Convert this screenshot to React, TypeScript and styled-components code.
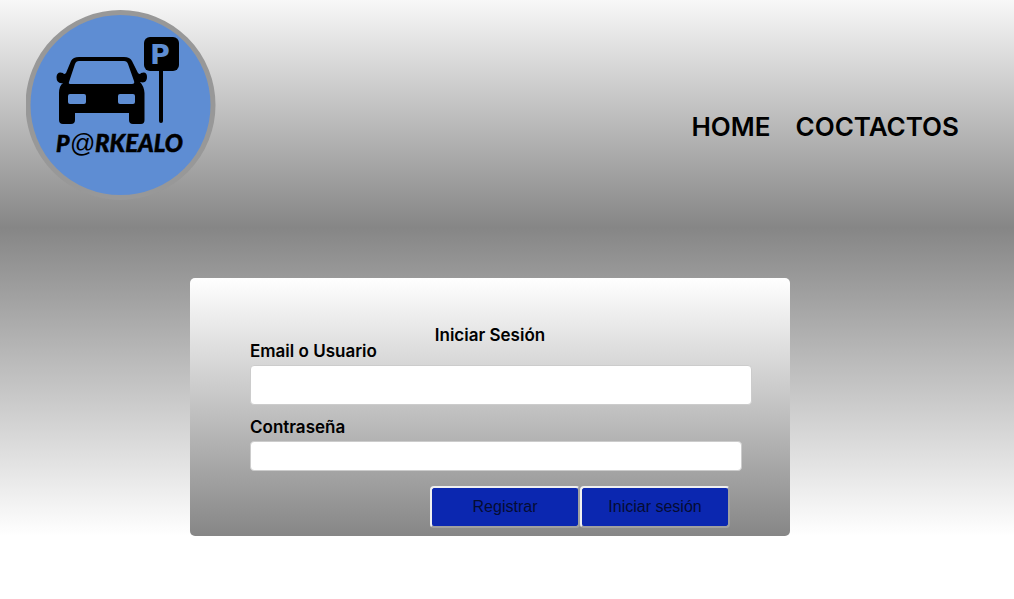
import React from "react";
import styled, { createGlobalStyle } from "styled-components";

const GlobalStyle = createGlobalStyle`
  *, *::before, *::after { box-sizing: border-box; }
  body {
    margin: 0;
    background: #fff;
    color: #000;
    font-family: Inter, "Liberation Sans", sans-serif;
    font-size: 17px;
    font-weight: 600;
  }
`;

const Header = styled.header`
  display: flex;
  justify-content: space-between;
  align-items: flex-start;
  padding: 10px 55px 28px 26px;
  background: linear-gradient(#f8f8f8, #868686);
`;

const LogoArt = styled.svg`
  display: block;
  width: 190px;
  height: 190px;
`;

const Nav = styled.nav`
  display: flex;
  gap: 25px;
  padding-top: 102px;
`;

const NavLink = styled.a`
  color: #000;
  font-size: 26px;
  line-height: 30px;
  text-decoration: none;
`;

const Main = styled.main`
  padding: 50px 34px 0 0;
  background: linear-gradient(#868686, #fff);
`;

const Card = styled.form`
  max-width: 600px;
  margin: 0 auto;
  padding: 49px 0 8px;
  border-radius: 5px;
  background: linear-gradient(#fff, #868686);
`;

const Title = styled.h1`
  margin: 0;
  font-size: 17px;
  font-weight: 600;
  line-height: 16px;
  text-align: center;
`;

const Fields = styled.div`
  display: flex;
  flex-direction: column;
  padding: 0 38px 0 60px;
`;

const Label = styled.label`
  line-height: 16px;
  margin-bottom: 6px;
`;

const Input = styled.input<{ $compact?: boolean }>`
  width: ${(p) => (p.$compact ? "calc(100% - 10px)" : "100%")};
  height: ${(p) => (p.$compact ? 30 : 40)}px;
  margin: 0 0 ${(p) => (p.$compact ? 15 : 14)}px;
  padding: 0 10px;
  border: 1px solid #ccc;
  border-radius: 4px;
  background: #fff;
  font: inherit;
`;

const Actions = styled.div`
  display: flex;
  justify-content: flex-end;
  padding-right: 22px;
`;

const Button = styled.button`
  width: 150px;
  height: 42px;
  padding: 0;
  border: 2px solid;
  border-color: #f0f0f0 #a0a0a0 #a0a0a0 #f0f0f0;
  border-radius: 4px;
  background: #0b27b0;
  color: #050c33;
  font: 400 16px "Liberation Sans", sans-serif;
`;

function Logo() {
  return (
    <LogoArt viewBox="26 10 190 190" role="img" aria-label="P@rkealo">
      <circle cx="120.5" cy="105" r="92.5" fill="#5e8dd3" stroke="#989898" strokeWidth="5" />
      <path
        fillRule="evenodd"
        d="M79 57H124Q130 57 132 61L138 73Q140 75 141 73Q147 71 147 77Q147 84 140 82Q144 86 144.500 93V120Q144.500 124 141 124H133Q129 124 129 120V113H75V120Q75 124 71 124H63Q59 124 59 120V93Q59 86 63 83Q56.500 84 56.500 77Q57 71 63 73Q64 75 66 73L71 61Q73 57 79 57ZM79 61Q76 61 75 64L69 82Q68 84 71 84H132Q135 84 134 81L128 64Q127 61 124 61ZM70 94Q68 94 68 96V102Q68 104 70 104H84Q86 104 86 102V96Q86 94 84 94ZM120 94Q118 94 118 96V102Q118 104 120 104H133Q135 104 135 102V96Q135 94 133 94Z"
      />
      <rect x="144" y="37" width="35" height="34" rx="6" />
      <path d="M161 70V121" stroke="#000" strokeWidth="4" strokeLinecap="round" />
      <text x="150" y="64" fill="#5e8dd3" fontFamily="DejaVu Sans, sans-serif" fontSize="27" fontWeight="700">P</text>
      <g fontFamily="Lato, sans-serif" fontSize="23" fontWeight="900" fontStyle="italic">
        <text x="56" y="152" stroke="#000" strokeWidth="0.5">P</text>
        <text x="70" y="152" fontFamily="Liberation Sans, sans-serif" fontSize="25" fontWeight="400" fontStyle="normal">@</text>
        <text x="95" y="152" fontSize="24" stroke="#000" strokeWidth="0.5">RKEALO</text>
      </g>
    </LogoArt>
  );
}

export default function App() {
  return (
    <>
      <GlobalStyle />
      <Header>
        <Logo />
        <Nav>
          <NavLink href="#home">HOME</NavLink>
          <NavLink href="#contactos">COCTACTOS</NavLink>
        </Nav>
      </Header>
      <Main>
        <Card>
          <Title>Iniciar Sesión</Title>
          <Fields>
            <Label htmlFor="user">Email o Usuario</Label>
            <Input id="user" type="text" />
            <Label htmlFor="password">Contraseña</Label>
            <Input id="password" type="password" $compact />
            <Actions>
              <Button type="button">Registrar</Button>
              <Button type="submit">Iniciar sesión</Button>
            </Actions>
          </Fields>
        </Card>
      </Main>
    </>
  );
}
